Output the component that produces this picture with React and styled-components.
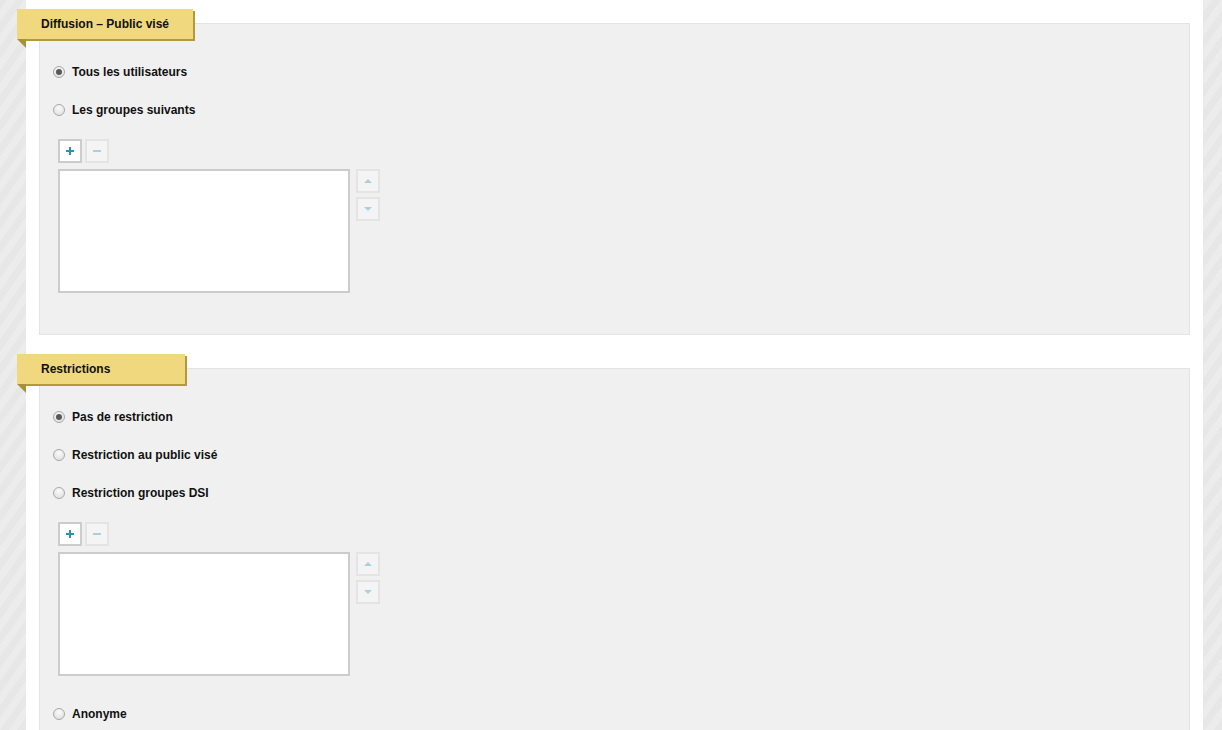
import React from "react";
import styled, { createGlobalStyle } from "styled-components";

const Global = createGlobalStyle`
  html, body { margin: 0; padding: 0; }
  body {
    font-family: "Liberation Sans", Arial, sans-serif;
    background-color: #e9e9e9;
    background-image: repeating-linear-gradient(
      -55deg,
      #e7e7e7 0px, #e7e7e7 7px,
      #ececec 7px, #ececec 14px
    );
    height: 730px;
    overflow: hidden;
  }
`;

const Page = styled.div`
  margin: 0 19px 0 26px;
  background: #ffffff;
  height: 730px;
  padding: 23px 13px 0 13px;
  box-sizing: border-box;
`;

const Panel = styled.section`
  position: relative;
  background: #f0f0f0;
  border: 1px solid #e4e4e4;
  padding: 29px 0 ${(p) => p.$pb}px 13px;
  margin-bottom: 33px;
`;

const Tab = styled.div`
  position: absolute;
  left: -23px;
  top: -15px;
  width: ${(p) => p.$w}px;
  height: 30px;
  box-sizing: border-box;
  padding-left: 24px;
  display: flex;
  align-items: center;
  background: #efd87e;
  box-shadow: 2px 2px 0 #b29a3c;
  font-size: 12px;
  font-weight: bold;
  color: #111;
  &::after {
    content: "";
    position: absolute;
    left: 0;
    top: 30px;
    width: 0;
    height: 0;
    border-top: 9px solid #a8903a;
    border-left: 9px solid transparent;
  }
`;

const RadioRow = styled.label`
  display: flex;
  align-items: center;
  height: 38px;
  gap: 7px;
  font-size: 12px;
  font-weight: bold;
  color: #111;
  margin-top: ${(p) => p.$mt || 0}px;
`;

const RadioDot = styled.span`
  width: 12px;
  height: 12px;
  box-sizing: border-box;
  border-radius: 50%;
  border: 1px solid #a8a8a8;
  background: radial-gradient(circle at 50% 30%, #fafafa 0%, #dcdcdc 100%);
  display: flex;
  align-items: center;
  justify-content: center;
  &::after {
    content: "";
    width: 6px;
    height: 6px;
    border-radius: 50%;
    background: ${(p) => (p.$checked ? "#585858" : "transparent")};
  }
`;

const GroupEditor = styled.div`
  margin-left: 5px;
  margin-top: 10px;
  display: flex;
  flex-direction: column;
  gap: 6px;
`;

const Toolbar = styled.div`
  display: flex;
  gap: 3px;
`;

const ListRow = styled.div`
  display: flex;
  gap: 6px;
  align-items: flex-start;
`;

const ListBox = styled.div`
  width: 292px;
  height: 124px;
  box-sizing: border-box;
  border: 2px solid #cccccc;
  background: #ffffff;
`;

const SideButtons = styled.div`
  display: flex;
  flex-direction: column;
  gap: 4px;
`;

const IconButton = styled.button`
  width: 24px;
  height: 24px;
  box-sizing: border-box;
  padding: 0;
  border: 2px solid ${(p) => (p.$active ? "#cccccc" : "#e4e4e4")};
  background: ${(p) => (p.$active ? "#ffffff" : "#f4f4f4")};
  display: flex;
  align-items: center;
  justify-content: center;
  cursor: pointer;
`;

const Plus = () => (
  <svg width="8" height="8" viewBox="0 0 8 8">
    <rect x="3" y="0" width="2" height="8" fill="#2b90b6" />
    <rect x="0" y="3" width="8" height="2" fill="#2b90b6" />
  </svg>
);
const Minus = () => (
  <svg width="8" height="8" viewBox="0 0 8 8">
    <rect x="0" y="3" width="8" height="2" fill="#a9d1dd" />
  </svg>
);
const Up = () => (
  <svg width="8" height="5" viewBox="0 0 8 5">
    <polygon points="4,0 8,4 0,4" fill="#a9d1dd" />
  </svg>
);
const Down = () => (
  <svg width="8" height="5" viewBox="0 0 8 5">
    <polygon points="0,0 8,0 4,4" fill="#a9d1dd" />
  </svg>
);

const Radio = ({ checked, children, mt }) => (
  <RadioRow $mt={mt}>
    <RadioDot $checked={checked} />
    {children}
  </RadioRow>
);

const Editor = () => (
  <GroupEditor>
    <Toolbar>
      <IconButton $active><Plus /></IconButton>
      <IconButton><Minus /></IconButton>
    </Toolbar>
    <ListRow>
      <ListBox />
      <SideButtons>
        <IconButton><Up /></IconButton>
        <IconButton><Down /></IconButton>
      </SideButtons>
    </ListRow>
  </GroupEditor>
);

export default function App() {
  return (
    <>
      <Global />
      <Page>
        <Panel $pb={41}>
          <Tab $w={176}>Diffusion – Public visé</Tab>
          <Radio checked>Tous les utilisateurs</Radio>
          <Radio>Les groupes suivants</Radio>
          <Editor />
        </Panel>
        <Panel $pb={40}>
          <Tab $w={168}>Restrictions</Tab>
          <Radio checked>Pas de restriction</Radio>
          <Radio>Restriction au public visé</Radio>
          <Radio>Restriction groupes DSI</Radio>
          <Editor />
          <Radio mt={19}>Anonyme</Radio>
        </Panel>
      </Page>
    </>
  );
}
